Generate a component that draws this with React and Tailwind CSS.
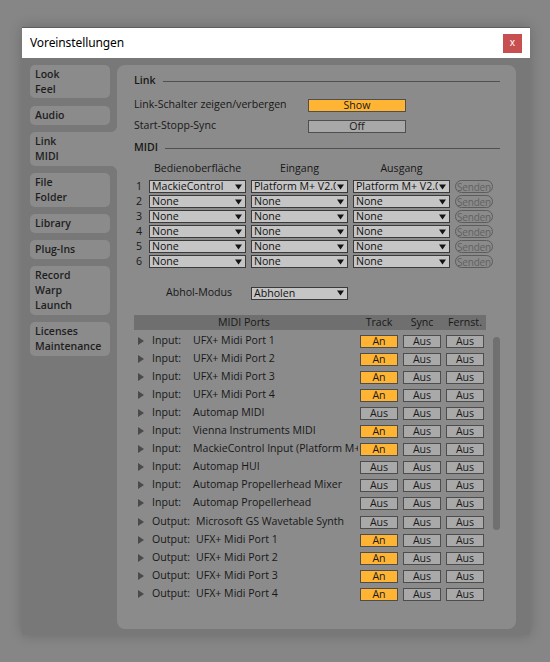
import React from "react";

const ports = [
  ["Input:", "UFX+ Midi Port 1", true],
  ["Input:", "UFX+ Midi Port 2", true],
  ["Input:", "UFX+ Midi Port 3", true],
  ["Input:", "UFX+ Midi Port 4", true],
  ["Input:", "Automap MIDI", false],
  ["Input:", "Vienna Instruments MIDI", true],
  ["Input:", "MackieControl Input (Platform M+ V2.0)", true],
  ["Input:", "Automap HUI", false],
  ["Input:", "Automap Propellerhead Mixer", false],
  ["Input:", "Automap Propellerhead", false],
  ["Output:", "Microsoft GS Wavetable Synth", false],
  ["Output:", "UFX+ Midi Port 1", true],
  ["Output:", "UFX+ Midi Port 2", true],
  ["Output:", "UFX+ Midi Port 3", true],
  ["Output:", "UFX+ Midi Port 4", true],
];

const surfaces = [
  ["MackieControl", "Platform M+ V2.0 (Port 1)", "Platform M+ V2.0 (Port 1)"],
  ["None", "None", "None"],
  ["None", "None", "None"],
  ["None", "None", "None"],
  ["None", "None", "None"],
  ["None", "None", "None"],
];

function Tri() {
  return (
    <svg width="6" height="8" viewBox="0 0 6 8">
      <path d="M0 0 L6 4 L0 8Z" fill="#4a4a4a" />
    </svg>
  );
}

function Arrow() {
  return (
    <svg width="7" height="6" viewBox="0 0 7 6">
      <path d="M0 0.5H7L3.5 5.5Z" fill="#141414" />
    </svg>
  );
}

function Dropdown({ text }) {
  return (
    <div className="h-[13px] w-[97px] flex items-center border border-[#3a3a3a] bg-[#c5c5c5] overflow-hidden">
      <span className="flex-1 min-w-0 pl-[2px] whitespace-nowrap overflow-hidden leading-[11px] text-[#111]">
        {text}
      </span>
      <span className="flex items-center pl-[1px] pr-[3px] h-full bg-[#c5c5c5]">
        <Arrow />
      </span>
    </div>
  );
}

function Toggle({ on, label }) {
  return (
    <div
      className={
        on
          ? "w-[38px] h-[13px] flex items-center justify-center border border-[#4d4d4d] bg-[#ffb433] leading-none text-[#1a1a1a]"
          : "w-[38px] h-[13px] flex items-center justify-center border border-[#4d4d4d] bg-[#a9a9a9] leading-none text-[#1a1a1a]"
      }
    >
      {label}
    </div>
  );
}

function Tab({ lines, h }) {
  return (
    <div className={`w-[80px] ${h} rounded-[5px] bg-[#8b8b8b] pl-[5px] pt-[2px] flex flex-col`}>
      {lines.map((l) => (
        <div key={l} className="h-[15px] leading-[15px]">
          {l}
        </div>
      ))}
    </div>
  );
}

export default function App() {
  return (
    <div className="w-[550px] h-[662px] bg-[#868686] pt-[27px] pl-[22px] font-['Open_Sans',sans-serif] text-[10.6px] text-[#181818] overflow-hidden">
      <div className="w-[508px] h-[608px] flex flex-col shadow-[0_0_12px_rgba(0,0,0,0.22)]">
        {/* title bar */}
        <div className="h-[31px] border-t border-[#5e5e5e] bg-white flex items-center justify-between pl-[8px] pr-[8px]">
          <span className="font-['Noto_Sans',sans-serif] text-[12px] text-black tracking-[-0.1px]">Voreinstellungen</span>
          <div className="w-[19px] h-[19px] bg-[#c84f50] flex items-center justify-center text-white text-[10px] leading-none font-['Noto_Sans',sans-serif] pb-[2px]">
            x
          </div>
        </div>
        {/* body */}
        <div className="flex-1 bg-[#787878] flex pt-[7px] pb-[6px] pl-[8px] pr-[14px]">
          {/* sidebar */}
          <div className="w-[80px] flex flex-col font-semibold text-[10.5px] text-[#1e1e1e]">
            <Tab lines={["Look", "Feel"]} h="h-[33px]" />
            <div className="mt-[8px]">
              <Tab lines={["Audio"]} h="h-[19px]" />
            </div>
            <div className="mt-[7px] relative w-[87px] h-[34px] rounded-l-[5px] bg-[#8b8b8b] pl-[5px] pt-[2px] flex flex-col">
              <div className="h-[15px] leading-[15px]">Link</div>
              <div className="h-[15px] leading-[15px]">MIDI</div>
              <div className="absolute right-0 -top-[7px] w-[7px] h-[7px] bg-[radial-gradient(circle_at_0_0,#787878_7px,#8b8b8b_7.5px)]" />
              <div className="absolute right-0 -bottom-[7px] w-[7px] h-[7px] bg-[radial-gradient(circle_at_0_100%,#787878_7px,#8b8b8b_7.5px)]" />
            </div>
            <div className="mt-[7px]">
              <Tab lines={["File", "Folder"]} h="h-[34px]" />
            </div>
            <div className="mt-[7px]">
              <Tab lines={["Library"]} h="h-[19px]" />
            </div>
            <div className="mt-[7px]">
              <Tab lines={["Plug-Ins"]} h="h-[19px]" />
            </div>
            <div className="mt-[7px]">
              <Tab lines={["Record", "Warp", "Launch"]} h="h-[49px]" />
            </div>
            <div className="mt-[7px]">
              <Tab lines={["Licenses", "Maintenance"]} h="h-[34px]" />
            </div>
          </div>

          {/* panel */}
          <div className="flex-1 ml-[7px] bg-[#8b8b8b] rounded-[8px] pl-[17px] pr-[16px] pt-[8px] flex flex-col">
            {/* Link header */}
            <div className="h-[16px] flex items-center">
              <span className="font-semibold">Link</span>
              <div className="flex-1 h-px bg-[#505050] ml-[7px]" />
            </div>
            <div className="mt-[9px] h-[14px] flex items-center">
              <span className="w-[174px]">Link-Schalter zeigen/verbergen</span>
              <div className="w-[98px] h-[13px] border border-[#4f4f4f] bg-[#ffb433] flex items-center justify-center leading-none">
                Show
              </div>
            </div>
            <div className="mt-[7px] h-[14px] flex items-center">
              <span className="w-[174px]">Start-Stopp-Sync</span>
              <div className="w-[98px] h-[13px] border border-[#4f4f4f] bg-[#a8a8a8] flex items-center justify-center leading-none">
                Off
              </div>
            </div>
            {/* MIDI header */}
            <div className="mt-[7px] h-[16px] flex items-center">
              <span className="font-semibold">MIDI</span>
              <div className="flex-1 h-px bg-[#505050] ml-[7px]" />
            </div>
            {/* column headers */}
            <div className="mt-[6px] h-[14px] flex items-center gap-[5px]">
              <span className="w-[10px]" />
              <span className="w-[97px] text-center">Bedienoberfläche</span>
              <span className="w-[97px] text-center">Eingang</span>
              <span className="w-[97px] text-center">Ausgang</span>
            </div>
            <div className="mt-[3px] flex flex-col">
              {surfaces.map((r, i) => (
                <div key={i} className="h-[15px] flex items-center gap-[5px]">
                  <span className="w-[10px] pl-[2px]">{i + 1}</span>
                  <Dropdown text={r[0]} />
                  <Dropdown text={r[1]} />
                  <Dropdown text={r[2]} />
                  <div className="w-[38px] h-[13px] rounded-full border border-[#5c5c5c] text-[#616161] flex items-center justify-center leading-none overflow-hidden text-[10px] tracking-[-0.2px]">
                    Senden
                  </div>
                </div>
              ))}
            </div>
            {/* Abhol */}
            <div className="mt-[17px] h-[14px] flex items-center">
              <span className="pl-[32px] w-[117px]">Abhol-Modus</span>
              <Dropdown text="Abholen" />
            </div>
            {/* table */}
            <div className="mt-[15px] flex">
              <div className="w-[352px] flex flex-col">
                <div className="h-[15px] bg-[#6f6f6f] flex items-center">
                  <span className="w-[220px] text-center">MIDI Ports</span>
                  <span className="ml-[6px] w-[38px] text-center">Track</span>
                  <span className="ml-[5px] w-[38px] text-center">Sync</span>
                  <span className="ml-[5px] w-[38px] text-center">Fernst.</span>
                </div>
                <div className="mt-[2px] flex flex-col">
                  {ports.map((p, i) => (
                    <div
                      key={i}
                      className={
                        i === 10
                          ? "mt-[1px] h-[18px] flex items-center pl-[4px] pr-[2px]"
                          : "h-[18px] flex items-center pl-[4px] pr-[2px]"
                      }
                    >
                      <Tri />
                      <div className="ml-[8px] flex-1 min-w-0 flex overflow-hidden whitespace-nowrap mr-[2px]">
                        <span className={p[0] === "Input:" ? "w-[41px] shrink-0" : "w-[44px] shrink-0"}>{p[0]}</span>
                        <span>{p[1]}</span>
                      </div>
                      <Toggle on={p[2]} label={p[2] ? "An" : "Aus"} />
                      <div className="ml-[5px]">
                        <Toggle on={false} label="Aus" />
                      </div>
                      <div className="ml-[5px]">
                        <Toggle on={false} label="Aus" />
                      </div>
                    </div>
                  ))}
                </div>
              </div>
              <div className="ml-[7px] pt-[22px]">
                <div className="w-[7px] h-[193px] rounded-full bg-[#707070]" />
              </div>
            </div>
          </div>
        </div>
      </div>
    </div>
  );
}
